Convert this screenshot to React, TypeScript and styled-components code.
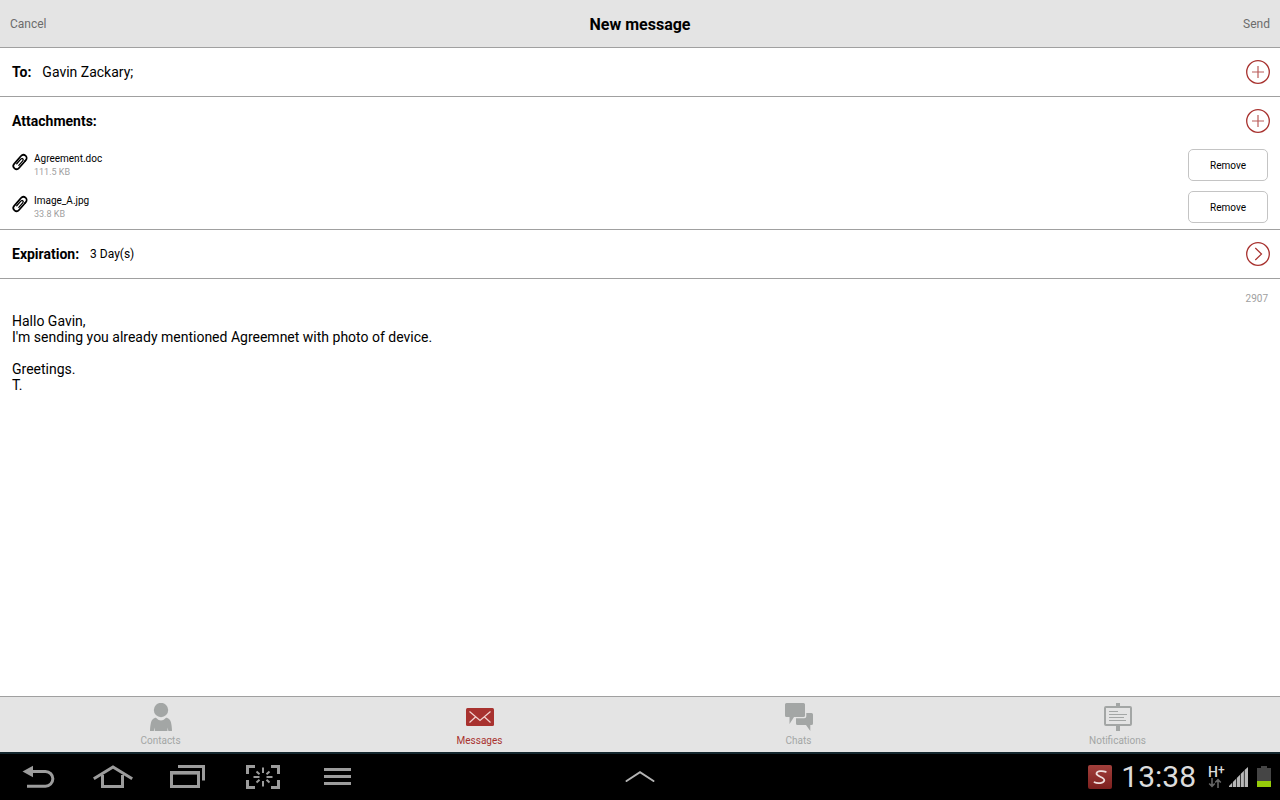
import React, { useState } from 'react';
import styled, { createGlobalStyle } from 'styled-components';

const GlobalStyle = createGlobalStyle`
  *, *::before, *::after { box-sizing: border-box; }
  body { margin: 0; background: #fff; color: #000; font-family: Roboto, sans-serif; }
  button, input, textarea { font: inherit; color: inherit; }
  button { padding: 0; border: 0; background: none; cursor: pointer; }
  svg { display: block; }
`;

const RED = '#a8322f';
const LINE = '#a0a0a0';
const BAR = '#e4e4e4';
const MUTED = '#a3a6a5';

const Screen = styled.div`
  display: flex;
  flex-direction: column;
  min-height: 100vh;
`;

const Header = styled.header`
  display: grid;
  grid-template-columns: 1fr auto 1fr;
  align-items: center;
  height: 48px;
  padding: 0 10px;
  background: ${BAR};
  border-bottom: 1px solid ${LINE};
`;

const Title = styled.h1`
  margin: 0;
  padding-top: 2px;
  font-size: 16px;
  line-height: 20px;
  font-weight: 700;
`;

const HeaderButton = styled.button<{ $end?: boolean }>`
  justify-self: ${p => (p.$end ? 'end' : 'start')};
  font-size: 12px;
  line-height: 16px;
  color: #6c6c6c;
`;

const Form = styled.main`
  flex: 1;
  display: flex;
  flex-direction: column;
`;

const Section = styled.section`
  border-bottom: 1px solid ${LINE};
`;

const Row = styled.div`
  display: flex;
  align-items: center;
  gap: 11px;
  height: 48px;
  padding: 0 10px 0 12px;
`;

const rowLabel = `
  margin: 0;
  font-size: 14px;
  line-height: 16px;
  font-weight: 700;
`;
const FieldLabel = styled.label`${rowLabel}`;
const RowHeading = styled.h2`${rowLabel}`;

const Recipient = styled.input`
  flex: 1;
  min-width: 0;
  padding: 0;
  border: 0;
  outline: 0;
  background: none;
  font-size: 14px;
  line-height: 16px;
`;

const Value = styled.span`
  font-size: 12px;
  line-height: 16px;
`;

const RoundButton = styled.button`
  flex: none;
  margin-left: auto;
  color: ${RED};
`;

const Files = styled.ul`
  margin: 0;
  padding: 4px 12px 6px;
  list-style: none;
  display: flex;
  flex-direction: column;
  gap: 10px;
`;

const FileItem = styled.li`
  display: flex;
  align-items: center;
  gap: 6px;
`;

const FileText = styled.div`
  flex: 1;
  display: flex;
  flex-direction: column;
`;

const FileName = styled.span`
  font-size: 10px;
  line-height: 14px;
`;

const FileSize = styled.span`
  font-size: 9px;
  line-height: 12px;
  color: #a0a0a0;
`;

const ClipBox = styled.span`
  padding-bottom: 6px;
`;

const RemoveButton = styled.button`
  width: 80px;
  height: 32px;
  border: 1px solid #c4c4c4;
  border-radius: 5px;
  font-size: 10px;
`;

const Counter = styled.output`
  align-self: flex-end;
  padding: 13px 12px 0;
  font-size: 10px;
  line-height: 14px;
  color: #a0a0a0;
`;

const Message = styled.textarea`
  flex: 1;
  width: 100%;
  padding: 7px 12px;
  border: 0;
  outline: 0;
  resize: none;
  background: none;
  font-size: 14px;
  line-height: 16px;
`;

const Tabs = styled.nav`
  display: grid;
  grid-template-columns: repeat(4, 1fr);
  height: 56px;
  padding: 0 3px 0 1px;
  background: ${BAR};
  border-top: 1px solid ${LINE};
`;

const Tab = styled.a<{ $active?: boolean }>`
  display: flex;
  flex-direction: column;
  align-items: center;
  gap: 3px;
  padding-top: 6px;
  font-size: 10px;
  line-height: 14px;
  text-decoration: none;
  color: ${p => (p.$active ? RED : MUTED)};
`;

const SystemBar = styled.footer`
  display: grid;
  grid-template-columns: 1fr auto 1fr;
  align-items: center;
  height: 48px;
  padding: 0 9px;
  background: #000;
  border-top: 2px solid #14272e;
  color: #9c9c9c;
`;

const Keys = styled.div`
  display: flex;
  gap: 35px;
  padding-left: 9px;
`;

const Status = styled.div`
  justify-self: end;
  display: flex;
  align-items: center;
  color: #dcdcdc;
`;

const Clock = styled.time`
  margin: 0 12px 0 9px;
  font-size: 30px;
  line-height: 32px;
`;

const Network = styled.span`
  display: flex;
  flex-direction: column;
  width: 18px;
  margin-right: 3px;
`;

const NetworkType = styled.span`
  display: flex;
  font-size: 14px;
  line-height: 12px;
  font-weight: 500;
`;

const NetworkPlus = styled.sup`
  font-size: 12px;
  line-height: 8px;
`;

const BatteryBox = styled.span`
  margin-left: 9px;
`;

const PlusIcon = () => (
  <svg width="24" height="24" viewBox="0 0 24 24" fill="none" stroke="currentColor" aria-hidden="true">
    <circle cx="12" cy="12" r="11.3" strokeWidth="1.3" />
    <path d="M12 6v12M6 12h12" strokeWidth="1.2" opacity=".8" />
  </svg>
);

const ChevronIcon = () => (
  <svg width="24" height="24" viewBox="0 0 24 24" fill="none" stroke="currentColor" aria-hidden="true">
    <circle cx="12" cy="12" r="11.3" strokeWidth="1.3" />
    <path d="M9.3 6l6.2 6-6.2 6" strokeWidth="1.2" />
  </svg>
);

const ClipIcon = () => (
  <svg width="16" height="18" viewBox="0 0 16 18" fill="none" stroke="#000" strokeLinecap="round" aria-hidden="true">
    <g transform="rotate(41 8 9)">
      <path d="M11.200 5.500V3.800a3.200 3.200 0 0 0-6.400 0v10.400a3.200 3.200 0 0 0 6.400 0V7.500" strokeWidth="1.800" />
      <path d="M11.200 7V4.500M6.700 12.500V6.300c0-2 2.600-2 2.600 0v6" strokeWidth="1.300" />
    </g>
  </svg>
);

const ContactsIcon = () => (
  <svg width="28" height="28" viewBox="0 0 28 28" fill="currentColor" aria-hidden="true">
    <circle cx="14" cy="7" r="7.200" />
    <path d="M8.200 14.800c.7-.2 1.200.1 1.600.6 1.100 1.300 2.500 2 4.200 2s3.100-.7 4.200-2c.4-.5.900-.8 1.600-.6 2.200.7 3.600 2.300 4.200 4.800.6 2.500.9 5 1 8.400h-3.600l-.8-3.500-.2 3.500H7.800l-.2-3.500-.8 3.500H3c.1-3.400.4-5.900 1-8.400.6-2.500 2-4.100 4.200-4.800z" />
  </svg>
);

const MessagesIcon = () => (
  <svg width="28" height="28" viewBox="0 0 28 28" fill="none" aria-hidden="true">
    <rect y="5" width="28" height="18" rx="1.500" fill="currentColor" />
    <path d="M3.500 8.500L14 17.500 24.500 8.500M3.500 19.500l6-5.500M24.500 19.500l-6-5.500" stroke="#f3d4d2" strokeWidth="1.200" />
  </svg>
);

const ChatsIcon = () => (
  <svg width="28" height="28" viewBox="0 0 28 28" fill="currentColor" aria-hidden="true">
    <path d="M1.500 0h17A1.500 1.500 0 0 1 20 1.500v11a1.500 1.500 0 0 1-1.500 1.500H9l-4.500 7V14h-3A1.500 1.500 0 0 1 0 12.500v-11A1.500 1.500 0 0 1 1.500 0z" />
    <path d="M21.300 10h5.200A1.500 1.500 0 0 1 28 11.500v9a1.500 1.500 0 0 1-1.500 1.500h-1.200v6L21 22h-8.500a1.500 1.500 0 0 1-1.500-1.500V15.300h8.300a2 2 0 0 0 2-2z" />
  </svg>
);

const NotificationsIcon = () => (
  <svg width="28" height="28" viewBox="0 0 28 28" fill="none" stroke="currentColor" aria-hidden="true">
    <path d="M14 0v4M14 23v5" strokeWidth="4" />
    <rect x="1" y="4" width="26" height="18" rx="1" strokeWidth="2" />
    <path d="M5 8.500h9M5 11.500h18M5 14.500h15M5 17.500h17" strokeWidth="1" />
  </svg>
);

const BackIcon = () => (
  <svg width="40" height="26" viewBox="0 0 40 26" fill="none" stroke="currentColor" strokeWidth="3" aria-hidden="true">
    <path d="M13 7.500h14.500a7.300 7.300 0 0 1 0 14.700H9" />
    <path d="M4.500 7.500L15 1.800v11.400z" fill="currentColor" stroke="none" />
  </svg>
);

const HomeIcon = () => (
  <svg width="40" height="26" viewBox="0 0 40 26" fill="none" stroke="currentColor" strokeWidth="3" aria-hidden="true">
    <path d="M.8 14.700L20 2.900l19.200 11.800" />
    <path d="M9.500 11v11.500h20V11" />
  </svg>
);

const RecentIcon = () => (
  <svg width="40" height="26" viewBox="0 0 40 26" fill="none" stroke="currentColor" strokeWidth="3" aria-hidden="true">
    <path d="M10 2.500h25.500V16.500" />
    <rect x="3.500" y="8.500" width="27" height="14" />
    <path d="M2 8.800h30" strokeWidth="3.600" />
  </svg>
);

const CaptureIcon = () => (
  <svg width="40" height="26" viewBox="0 0 40 26" fill="none" stroke="currentColor" aria-hidden="true">
    <path d="M12 2.500H4.500V10M28 2.500h7.500V10M12 23.500H4.500V16M28 23.500h7.500V16" strokeWidth="3" />
    <path d="M20 3.500v5.500M20 17v5.500M10.500 13h6M23.500 13h6M13.500 7.500l3 2.700M26.500 7.500l-3 2.700M13.500 18.500l3-2.700M26.500 18.500l-3-2.700" strokeWidth="2" />
  </svg>
);

const MenuIcon = () => (
  <svg width="40" height="26" viewBox="0 0 40 26" stroke="currentColor" strokeWidth="3" aria-hidden="true">
    <path d="M6 5.500h27M6 12.500h27M6 19.500h27" />
  </svg>
);

const UpIcon = () => (
  <svg width="30" height="26" viewBox="0 0 30 26" fill="none" stroke="#b4b4b4" strokeWidth="2" strokeLinecap="round" aria-hidden="true">
    <path d="M1.500 17L15 8.200 28.500 17" />
  </svg>
);

const AppBadge = () => (
  <svg width="24" height="24" viewBox="0 0 24 24" fill="none" aria-hidden="true">
    <defs>
      <linearGradient id="badge" x1="0" y1="0" x2="0" y2="1">
        <stop offset="0" stopColor="#a2403c" />
        <stop offset="1" stopColor="#7d201e" />
      </linearGradient>
    </defs>
    <rect width="24" height="24" rx="2" fill="url(#badge)" />
    <path d="M17.800 6.800c-3.600-1.300-9.300-.9-9.300 2 0 2.700 8.300 3.300 7.800 6.500-.5 3.200-7 3.500-9.800 2" stroke="#f0dfdd" strokeWidth="1.800" strokeLinecap="round" />
  </svg>
);

const DataArrows = () => (
  <svg width="14" height="10" viewBox="0 0 14 10" fill="none" stroke="#666" strokeWidth="1.600" aria-hidden="true">
    <path d="M4 0v8M1.200 5.500L4 8.300l2.800-2.800M10 10V2M7.200 4.500L10 1.700l2.800 2.800" />
  </svg>
);

const SignalIcon = () => (
  <svg width="19" height="20" viewBox="0 0 19 20" fill="#b8b8b8" aria-hidden="true">
    <path d="M0 20v-1l3.200-3.200V20zM3.900 20v-4.900l3.200-3.300V20zM7.800 20v-8.900l3.200-3.300V20zM11.700 20V7.100l3.200-3.300V20zM15.600 20V3.100L19 0v20z" />
  </svg>
);

const BatteryIcon = () => (
  <svg width="14" height="22" viewBox="0 0 14 22" aria-hidden="true">
    <path d="M4 0h6v2h4v19H0V2h4z" fill="#454545" />
    <path d="M0 15h14v6H0z" fill="#96cc0a" />
  </svg>
);

const tabs = [
  { name: 'Contacts', Icon: ContactsIcon },
  { name: 'Messages', Icon: MessagesIcon },
  { name: 'Chats', Icon: ChatsIcon },
  { name: 'Notifications', Icon: NotificationsIcon },
];

const keys = [
  { name: 'Back', Icon: BackIcon },
  { name: 'Home', Icon: HomeIcon },
  { name: 'Recent apps', Icon: RecentIcon },
  { name: 'Screen capture', Icon: CaptureIcon },
  { name: 'Menu', Icon: MenuIcon },
];

const initialText = `Hallo Gavin,
I'm sending you already mentioned Agreemnet with photo of device.

Greetings.
T.`;

export default function App() {
  const [files, setFiles] = useState([
    { name: 'Agreement.doc', size: '111.5 KB' },
    { name: 'Image_A.jpg', size: '33.8 KB' },
  ]);
  const [to, setTo] = useState('Gavin Zackary;');
  const [text, setText] = useState(initialText);

  return (
    <Screen>
      <GlobalStyle />
      <Header>
        <HeaderButton type="button">Cancel</HeaderButton>
        <Title>New message</Title>
        <HeaderButton type="button" $end>Send</HeaderButton>
      </Header>

      <Form>
        <Section>
          <Row>
            <FieldLabel htmlFor="to">To:</FieldLabel>
            <Recipient id="to" type="text" value={to} onChange={e => setTo(e.target.value)} />
            <RoundButton type="button" aria-label="Add recipient"><PlusIcon /></RoundButton>
          </Row>
        </Section>

        <Section>
          <Row>
            <RowHeading>Attachments:</RowHeading>
            <RoundButton type="button" aria-label="Add attachment"><PlusIcon /></RoundButton>
          </Row>
          <Files>
            {files.map(file => (
              <FileItem key={file.name}>
                <ClipBox><ClipIcon /></ClipBox>
                <FileText>
                  <FileName>{file.name}</FileName>
                  <FileSize>{file.size}</FileSize>
                </FileText>
                <RemoveButton type="button" onClick={() => setFiles(files.filter(f => f !== file))}>
                  Remove
                </RemoveButton>
              </FileItem>
            ))}
          </Files>
        </Section>

        <Section>
          <Row>
            <RowHeading>Expiration:</RowHeading>
            <Value>3 Day(s)</Value>
            <RoundButton type="button" aria-label="Change expiration"><ChevronIcon /></RoundButton>
          </Row>
        </Section>

        <Counter htmlFor="message">{2907 + initialText.length - text.length}</Counter>
        <Message id="message" aria-label="Message" spellCheck={false} value={text} onChange={e => setText(e.target.value)} />
      </Form>

      <Tabs>
        {tabs.map(({ name, Icon }) => (
          <Tab key={name} href={`#${name.toLowerCase()}`} $active={name === 'Messages'}>
            <Icon />
            {name}
          </Tab>
        ))}
      </Tabs>

      <SystemBar>
        <Keys>
          {keys.map(({ name, Icon }) => (
            <button key={name} type="button" aria-label={name}><Icon /></button>
          ))}
        </Keys>
        <button type="button" aria-label="Open tray"><UpIcon /></button>
        <Status>
          <AppBadge />
          <Clock>13:38</Clock>
          <Network>
            <NetworkType>H<NetworkPlus>+</NetworkPlus></NetworkType>
            <DataArrows />
          </Network>
          <SignalIcon />
          <BatteryBox><BatteryIcon /></BatteryBox>
        </Status>
      </SystemBar>
    </Screen>
  );
}
